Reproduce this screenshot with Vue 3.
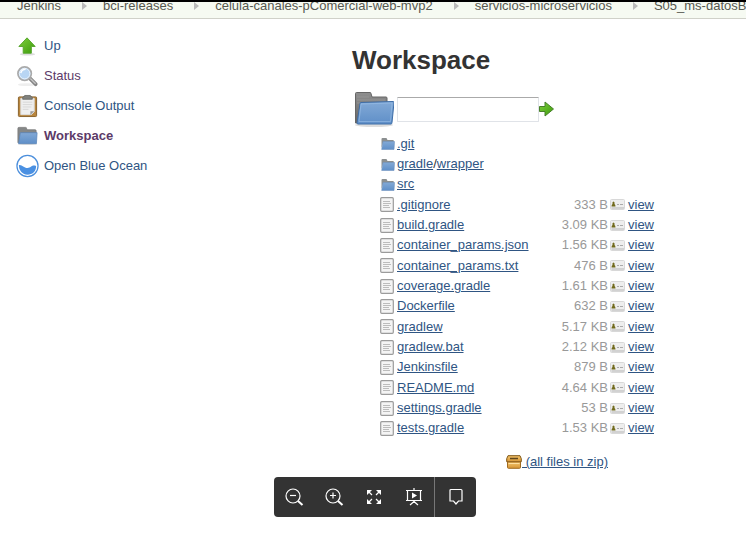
<script setup>
import { ref } from 'vue'

const path = ref('')
const crumbs = ['Jenkins', 'bci-releases', 'celula-canales-pComercial-web-mvp2', 'servicios-microservicios', 'S05_ms-datosBasicos']
const tasks = [
  { label: 'Up', icon: 'up' },
  { label: 'Status', icon: 'search', visited: true },
  { label: 'Console Output', icon: 'clipboard' },
  { label: 'Workspace', icon: 'folder', visited: true, current: true },
  { label: 'Open Blue Ocean', icon: 'ocean' },
]
const entries = [
  { parts: ['.git'] },
  { parts: ['gradle', 'wrapper'] },
  { parts: ['src'] },
  { parts: ['.gitignore'], size: '333 B' },
  { parts: ['build.gradle'], size: '3.09 KB' },
  { parts: ['container_params.json'], size: '1.56 KB' },
  { parts: ['container_params.txt'], size: '476 B' },
  { parts: ['coverage.gradle'], size: '1.61 KB' },
  { parts: ['Dockerfile'], size: '632 B' },
  { parts: ['gradlew'], size: '5.17 KB' },
  { parts: ['gradlew.bat'], size: '2.12 KB' },
  { parts: ['Jenkinsfile'], size: '879 B' },
  { parts: ['README.md'], size: '4.64 KB' },
  { parts: ['settings.gradle'], size: '53 B' },
  { parts: ['tests.gradle'], size: '1.53 KB' },
]
</script>

<template>
  <div class="page">
    <svg class="defs" aria-hidden="true">
      <defs>
        <linearGradient id="green" x1="0" y1="0" x2="1" y2="1">
          <stop offset="0" stop-color="#7fd03c" /><stop offset="1" stop-color="#3c9a0c" />
        </linearGradient>
        <linearGradient id="blue" x1="0" y1="0" x2="0" y2="1">
          <stop offset="0" stop-color="#82a9d6" /><stop offset="1" stop-color="#5f8fc8" />
        </linearGradient>
        <linearGradient id="grey" x1="0" y1="0" x2="0" y2="1">
          <stop offset="0" stop-color="#8f8f8f" /><stop offset="1" stop-color="#666" />
        </linearGradient>
        <linearGradient id="gold" x1="0" y1="0" x2="0" y2="1">
          <stop offset="0" stop-color="#f3c56c" /><stop offset="1" stop-color="#d79535" />
        </linearGradient>
      </defs>
      <symbol id="folder" viewBox="0 0 24 24">
        <ellipse cx="12" cy="20.500" rx="10" ry="1" fill="#ddd" />
        <path d="M2 19V4q0-1 1-1h7q1 0 1 1l.5 1.500H20q1 0 1 1V9H5v10z" fill="#858787" stroke="#777" stroke-width=".8" />
        <path d="M4.500 8.500H22L21.300 20H2.700z" fill="url(#blue)" stroke="#5c86b8" stroke-width=".8" />
      </symbol>
      <symbol id="small-folder" viewBox="0 0 15 15">
        <path d="M1.500 12V3q0-1 1-1H6q1 0 1 1l.5 1H13q.8 0 .8.800V7H3z" fill="#8b8f90" />
        <path d="M3 5.500h11.500L14 13.500H1.700z" fill="url(#blue)" stroke="#7094bf" stroke-width=".6" />
      </symbol>
      <symbol id="file" viewBox="0 0 14 15">
        <rect x=".7" y=".7" width="12.600" height="13.600" rx="1" fill="#f4f4f4" stroke="#9b9b9b" stroke-width="1.200" />
        <path d="M3 4.500h7M3 6.500h8M3 8.500h6M3 10.500h7" stroke="#bcbcbc" />
      </symbol>
      <symbol id="card" viewBox="0 0 15 11">
        <rect x=".5" y=".5" width="14" height="10" rx="1" fill="#eee" stroke="#d8d8d8" />
        <path d="M1.500 7.500q0-2 1-2.500-.5-2.500 1-2.500T4.500 5q1 .5 1 2.500z" fill="#716a1c" />
        <path d="M7 5.500h2M10 5.500h3" stroke="#aaa" />
        <path d="M1.500 9H14" stroke="#b5b5b5" />
      </symbol>
    </svg>

    <nav class="crumbs" aria-label="Breadcrumb">
      <ol>
        <li v-for="(c, i) in crumbs" :key="c">
          <svg v-if="i" width="5" height="8" viewBox="0 0 5 8"><path d="M0 0l5 4-5 4z" fill="#bbb" /></svg>
          <a href="#">{{ c }}</a>
        </li>
      </ol>
    </nav>

    <div class="body">
      <aside>
        <a v-for="t in tasks" :key="t.label" href="#" class="task" :class="{ visited: t.visited, current: t.current }">
          <svg v-if="t.icon === 'up'" viewBox="0 0 24 24">
            <ellipse cx="12" cy="20.500" rx="8" ry="1.500" fill="#ddd" />
            <path d="M11.500 3.500L20 12.500H16V19.500H7.500V12.500H3z" fill="url(#green)" stroke="#56a52c" stroke-linejoin="round" />
          </svg>
          <svg v-else-if="t.icon === 'search'" viewBox="0 0 24 24">
            <ellipse cx="11" cy="21" rx="9" ry="1.500" fill="#eee" />
            <path d="M14.500 14.500L20.500 20.500" stroke="#858585" stroke-width="4" stroke-linecap="round" />
            <path d="M15 14.500L20.500 20" stroke="#c4c4c4" stroke-width="1.500" />
            <circle cx="9" cy="9.500" r="7" fill="#b8d5f3" stroke="#aaa" stroke-width="1.800" />
            <circle cx="9" cy="9.500" r="5.500" fill="none" stroke="#e8f1fb" />
            <path d="M5 9q1-4 5-4" fill="none" stroke="#fff" stroke-width="1.500" />
          </svg>
          <svg v-else-if="t.icon === 'clipboard'" viewBox="0 0 24 24">
            <rect x="2.500" y="2.500" width="19" height="20.500" rx="1" fill="#b8863e" stroke="#88602b" />
            <path d="M5 4h14v14l-3 3H5z" fill="#efefef" stroke="#ddd" />
            <path d="M7 8h10M7 10.500h10M7 13h9M7 15.500h6" stroke="#d6d6d6" />
            <path d="M19 17.500h-4V21.500z" fill="#999" />
            <path d="M7 5V3q0-1 2-1V1h6v1q2 0 2 1v2z" fill="#80827e" stroke="#62645f" stroke-width=".8" />
          </svg>
          <svg v-else-if="t.icon === 'folder'" viewBox="0 0 24 24"><use href="#folder" /></svg>
          <svg v-else viewBox="0 0 24 24">
            <circle cx="12" cy="12" r="11" fill="#fff" stroke="#4c8fdc" stroke-width="1.300" />
            <path d="M3 11c3-1 5 3 9 3 4 0 4-4 9-2 0 6-4 9-9 9s-9-4-9-10z" fill="#4a90e2" />
          </svg>
          <span>{{ t.label }}</span>
        </a>
      </aside>

      <main>
        <h1>Workspace</h1>
        <form @submit.prevent>
          <svg class="big" viewBox="0 0 42 38">
            <ellipse cx="22" cy="35" rx="19" ry="2" fill="#ddd" />
            <path d="M3.500 33V3.500q0-1 1-1H18q1 0 1 1L20 7h14q1 0 1 1v25z" fill="url(#grey)" stroke="#666" />
            <path d="M5 7h12M5 10h28M5 13h28" stroke="#9a9a9a" stroke-width=".8" />
            <path d="M8 13.500q0-1 1-1l32-1q1 0 1 1l-2 20q0 1.500-1 1.500H6q-1 0-1-1z" fill="url(#blue)" stroke="#3f6ea8" />
            <path d="M9 14l31-1-1.500 18.500H7z" fill="none" stroke="#9bc0e8" stroke-width=".6" />
          </svg>
          <input v-model="path" type="text" aria-label="Path">
          <button type="submit" aria-label="Go">
            <svg width="16" height="16" viewBox="0 0 16 16"><path d="M.500 5.500H6V1l8.500 7L6 15v-4.500H.500z" fill="url(#green)" stroke="#47802a" stroke-linejoin="round" /></svg>
          </button>
        </form>

        <table>
          <tbody>
            <tr v-for="e in entries" :key="e.parts[0]">
              <td class="icon">
                <svg v-if="e.size" width="14" height="15"><use href="#file" /></svg>
                <svg v-else width="15" height="15"><use href="#small-folder" /></svg>
              </td>
              <td class="name">
                <template v-for="(p, i) in e.parts" :key="p"><template v-if="i">/</template><a href="#">{{ p }}</a></template>
              </td>
              <td class="size">{{ e.size }}</td>
              <td class="view">
                <div v-if="e.size"><svg width="15" height="11"><use href="#card" /></svg><a href="#">view</a></div>
              </td>
            </tr>
          </tbody>
        </table>
        <div class="zip">
          <a href="#">
            <svg width="16" height="14" viewBox="0 0 16 14">
              <path d="M2 .7h12l1.300 3v3H.7v-3z" fill="url(#gold)" stroke="#805817" />
              <path d="M1.500 7h13v5.500q0 .8-1 .8h-11q-1 0-1-.8z" fill="url(#gold)" stroke="#a06b20" />
              <path d="M4 3.500h8" stroke="#5e461c" stroke-width="1.500" />
              <path d="M2.500 8.500h11" stroke="#ffe0a0" />
            </svg>&nbsp;(all files in zip)</a>
        </div>
      </main>
    </div>

    <div class="toolbar" role="toolbar" aria-label="Viewer">
      <button aria-label="Zoom out">
        <svg viewBox="0 0 20 20"><circle cx="9" cy="9" r="7" /><path d="M6 8.500h6" /><path d="M14 14l4.500 4" stroke-width="2" /></svg>
      </button>
      <button aria-label="Zoom in">
        <svg viewBox="0 0 20 20"><circle cx="9" cy="9" r="7" /><path d="M6 8.500h6M9 5.500v6" /><path d="M14 14l4.500 4" stroke-width="2" /></svg>
      </button>
      <button aria-label="Full screen">
        <svg viewBox="0 0 20 20"><path d="M4 4l4 4M16 4l-4 4M4 16l4-4M16 16l-4-4" /><path d="M3 3h5L3 8zM17 3h-5l5 5zM3 17h5l-5-5zM17 17h-5l5-5z" fill="#fff" stroke="none" /></svg>
      </button>
      <button aria-label="Present">
        <svg viewBox="0 0 20 20"><path d="M2 3.500h16M2 13.500h16M3.500 3.500v10M16.500 3.500v10M10 1v2M10 14v2M10 14.500L6 18M10 14.500l4 3.500" /><path d="M8 5.500l5 3-5 3z" fill="#fff" stroke="none" /></svg>
      </button>
      <button class="comment" aria-label="Comment">
        <svg viewBox="0 0 20 20"><path d="M5 2.500h10q1 0 1 1V14h-3.500L10 17l-2.500-3H4V3.500q0-1 1-1z" /></svg>
      </button>
    </div>
  </div>
</template>

<style>
body {
  margin: 0;
  background: #fff;
}
</style>

<style scoped>
.page {
  font: 13px/16px "Liberation Sans", Arial, sans-serif;
  color: #333;
}
.defs {
  position: absolute;
  width: 0;
  height: 0;
}
a {
  color: #2f5583;
}
.crumbs {
  border-top: 2px solid #000;
  border-bottom: 1px solid #d0d1c9;
  background: #f6faf2;
  overflow: hidden;
}
.crumbs ol {
  display: flex;
  margin: -4px 0 0;
  padding: 0 0 4px 17px;
  list-style: none;
  white-space: nowrap;
}
.crumbs li {
  display: flex;
  align-items: center;
}
.crumbs svg {
  flex: none;
  margin: 0 16px 0 21px;
}
.crumbs a {
  color: #565850;
  text-decoration: none;
}
.body {
  display: grid;
  grid-template-columns: 336px 1fr;
  padding: 12px 16px 0;
}
.task {
  display: flex;
  align-items: center;
  gap: 5px;
  height: 30px;
  text-decoration: none;
}
.task svg {
  flex: none;
  width: 23px;
  height: 24px;
}
.task.visited {
  color: #5c3a68;
}
.current {
  font-weight: bold;
}
h1 {
  margin: 14px 0;
  font-size: 26px;
  line-height: 30px;
}
form {
  display: flex;
  align-items: center;
  height: 40px;
}
.big {
  width: 42px;
  height: 38px;
  margin-right: 3px;
}
input {
  box-sizing: border-box;
  width: 142px;
  height: 25px;
  border: 1px solid #e0e3e8;
  border-top-color: #aaa;
  border-radius: 1px;
  font: inherit;
}
button {
  display: flex;
  align-items: center;
  justify-content: center;
  padding: 0;
  border: 0;
  background: none;
}
table {
  margin: 4px 0 0 28px;
  border-collapse: collapse;
}
tr {
  height: 20px;
}
tr:nth-child(3n + 1) {
  height: 21px;
}
td {
  padding: 0;
}
td svg {
  display: block;
}
.icon {
  width: 17px;
}
.name {
  width: 136px;
}
.size {
  width: 75px;
  text-align: right;
  color: #999;
}
.view div {
  display: flex;
  align-items: center;
  gap: 3px;
  padding-left: 2px;
}
.zip {
  width: 256px;
  margin-top: 16px;
  text-align: right;
}
.zip svg {
  vertical-align: -3px;
}
.toolbar {
  position: fixed;
  bottom: 17px;
  left: calc(50% + 2px);
  display: flex;
  height: 40px;
  border-radius: 4px;
  background: #333;
  transform: translateX(-50%);
}
.toolbar button {
  width: 40px;
}
.toolbar .comment {
  width: 42px;
  border-left: 1px solid #777;
}
.toolbar svg {
  width: 20px;
  height: 20px;
  fill: none;
  stroke: #fff;
  stroke-width: 1.200;
}
</style>
